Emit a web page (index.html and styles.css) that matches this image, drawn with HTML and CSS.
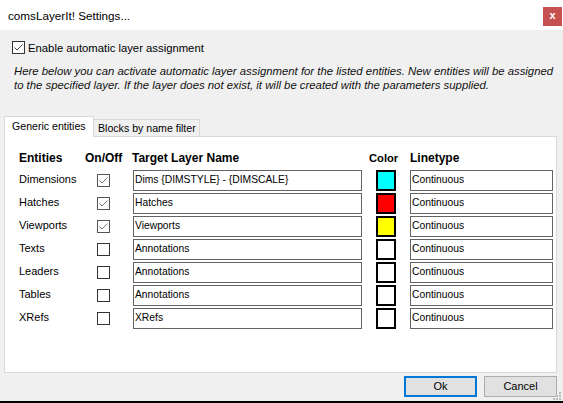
FILE: index.html
```html
<!DOCTYPE html>
<html>
<head>
<meta charset="utf-8">
<link rel="stylesheet" href="styles.css">
</head>
<body>
<div class="window">
  <div class="titlebar">
    <span class="title">comsLayerIt! Settings...</span>
    <span class="close">x</span>
  </div>
  <div class="content">
    <div class="enable">
      <span class="cb"><svg viewBox="0 0 13 13" width="13" height="13"><polyline points="2.5,6.5 5,9 10.5,3.5" fill="none" stroke="#444" stroke-width="1"/></svg></span>
      <span>Enable automatic layer assignment</span>
    </div>
    <p class="desc">Here below you can activate automatic layer assignment for the listed entities. New entities will be assigned<br>to the specified layer. If the layer does not exist, it will be created with the parameters supplied.</p>
    <div class="tabs">
      <div class="tab active">Generic entities</div>
      <div class="tab">Blocks by name filter</div>
    </div>
    <div class="panel">
      <div class="grid">
        <div class="hd">Entities</div>
        <div class="hd">On/Off</div>
        <div class="hd hd-target">Target Layer Name</div>
        <div class="hd hd-color">Color</div>
        <div class="hd">Linetype</div>

        <div class="lbl">Dimensions</div>
        <div class="chk"><span class="cb gray"><svg viewBox="0 0 13 13" width="13" height="13"><polyline points="2.5,6.5 5,9 10.5,3.5" fill="none" stroke="#777" stroke-width="1"/></svg></span></div>
        <div class="field">Dims {DIMSTYLE} - {DIMSCALE}</div>
        <div class="color"><span class="swatch cyan"></span></div>
        <div class="field">Continuous</div>

        <div class="lbl">Hatches</div>
        <div class="chk"><span class="cb gray"><svg viewBox="0 0 13 13" width="13" height="13"><polyline points="2.5,6.5 5,9 10.5,3.5" fill="none" stroke="#777" stroke-width="1"/></svg></span></div>
        <div class="field">Hatches</div>
        <div class="color"><span class="swatch red"></span></div>
        <div class="field">Continuous</div>

        <div class="lbl">Viewports</div>
        <div class="chk"><span class="cb gray"><svg viewBox="0 0 13 13" width="13" height="13"><polyline points="2.5,6.5 5,9 10.5,3.5" fill="none" stroke="#777" stroke-width="1"/></svg></span></div>
        <div class="field">Viewports</div>
        <div class="color"><span class="swatch yellow"></span></div>
        <div class="field">Continuous</div>

        <div class="lbl">Texts</div>
        <div class="chk"><span class="cb"></span></div>
        <div class="field">Annotations</div>
        <div class="color"><span class="swatch"></span></div>
        <div class="field">Continuous</div>

        <div class="lbl">Leaders</div>
        <div class="chk"><span class="cb"></span></div>
        <div class="field">Annotations</div>
        <div class="color"><span class="swatch"></span></div>
        <div class="field">Continuous</div>

        <div class="lbl">Tables</div>
        <div class="chk"><span class="cb"></span></div>
        <div class="field">Annotations</div>
        <div class="color"><span class="swatch"></span></div>
        <div class="field">Continuous</div>

        <div class="lbl">XRefs</div>
        <div class="chk"><span class="cb"></span></div>
        <div class="field">XRefs</div>
        <div class="color"><span class="swatch"></span></div>
        <div class="field">Continuous</div>
      </div>
    </div>
    <div class="buttons">
      <div class="btn ok">Ok</div>
      <div class="btn">Cancel</div>
    </div>
  </div>
  <svg class="grip" width="9" height="9" viewBox="0 0 9 9">
    <rect x="6" y="0" width="2" height="2" fill="#bbb"/>
    <rect x="3" y="3" width="2" height="2" fill="#bbb"/>
    <rect x="6" y="3" width="2" height="2" fill="#bbb"/>
    <rect x="0" y="6" width="2" height="2" fill="#bbb"/>
    <rect x="3" y="6" width="2" height="2" fill="#bbb"/>
    <rect x="6" y="6" width="2" height="2" fill="#bbb"/>
  </svg>
</div>
</body>
</html>
```
FILE: styles.css
```css
* { box-sizing: border-box; }
html, body { margin: 0; padding: 0; }
body {
  font-family: "Liberation Sans", Arial, sans-serif;
  font-size: 11px;
  color: #000;
  background: #f0f0f0;
}
.window {
  position: relative;
  width: 563px;
  height: 403px;
  background: #f0f0f0;
  border-bottom: 2px solid #000;
  display: flex;
  flex-direction: column;
}
.titlebar {
  height: 30px;
  background: #fff;
  display: flex;
  align-items: center;
  justify-content: space-between;
  padding: 0 1px 0 8px;
}
.title { font-size: 11.7px; }
.close {
  width: 19px;
  height: 19px;
  background: #c75050;
  color: #fff;
  font-weight: bold;
  font-size: 11px;
  line-height: 17px;
  text-align: center;
  margin-top: 2px;
}
.content {
  padding: 0 6px 0 4px;
  display: flex;
  flex-direction: column;
}
.enable {
  margin-top: 9px;
  margin-left: 8px;
  height: 17px;
  display: flex;
  align-items: center;
  gap: 3px;
  white-space: nowrap;
  font-size: 11.3px;
}
.cb {
  display: inline-block;
  width: 13px;
  height: 13px;
  border: 1px solid #333;
  background: #fff;
}
.cb svg { display: block; margin: -1px; }
.cb.gray { border-color: #555; }
.desc {
  margin: 8px 0 0 10px;
  font-style: italic;
  font-size: 11.35px;
  line-height: 14px;
  color: #111;
  white-space: nowrap;
}
.tabs {
  margin-top: 24px;
  display: flex;
  align-items: flex-end;
  height: 20px;
  position: relative;
  z-index: 1;
  white-space: nowrap;
  font-size: 10.6px;
}
.tab {
  height: 17px;
  border: 1px solid #d9d9d9;
  border-bottom: none;
  background: #f0f0f0;
  width: 107px;
  margin-left: -1px;
  padding-left: 4px;
  line-height: 17px;
}
.tab.active {
  position: relative;
  z-index: 2;
  margin-left: 0;
  height: 21px;
  margin-bottom: -1px;
  width: 90px;
  background: #fff;
  padding-left: 7px;
  line-height: 18px;
}
.panel {
  height: 237px;
  border: 1px solid #d9d9d9;
  background: #fff;
  padding: 13px 0 0 14px;
}
.grid {
  display: grid;
  grid-template-columns: 66px 48px 229px 48px 143px;
  grid-template-rows: 18px;
  grid-auto-rows: 21px;
  row-gap: 2px;
}
.hd {
  font-weight: bold;
  font-size: 12px;
  line-height: 17px;
  white-space: nowrap;
}
.hd-target { margin-left: -1px; }
.hd-color { padding-left: 7px; font-size: 11.2px; }
.lbl { line-height: 19px; }
.chk { padding: 4px 0 0 12px; }
.field {
  border: 1px solid #646464;
  padding: 0 1px;
  font-size: 10.3px;
  line-height: 17px;
  white-space: nowrap;
  overflow: hidden;
}
.color { padding-left: 14px; }
.swatch {
  display: block;
  width: 20px;
  height: 21px;
  border: 2px solid #000;
  background: #fff;
}
.swatch.cyan { background: #00ffff; }
.swatch.red { background: #ff0000; }
.swatch.yellow { background: #ffff00; }
.buttons {
  margin-top: 3px;
  display: flex;
  justify-content: flex-end;
  gap: 7px;
}
.btn {
  width: 73px;
  height: 21px;
  border: 1px solid #adadad;
  background: #e1e1e1;
  text-align: center;
  line-height: 19px;
}
.btn.ok { border: 2px solid #0078d7; line-height: 17px; }
.grip {
  position: absolute;
  right: 1px;
  bottom: 0;
}
```
